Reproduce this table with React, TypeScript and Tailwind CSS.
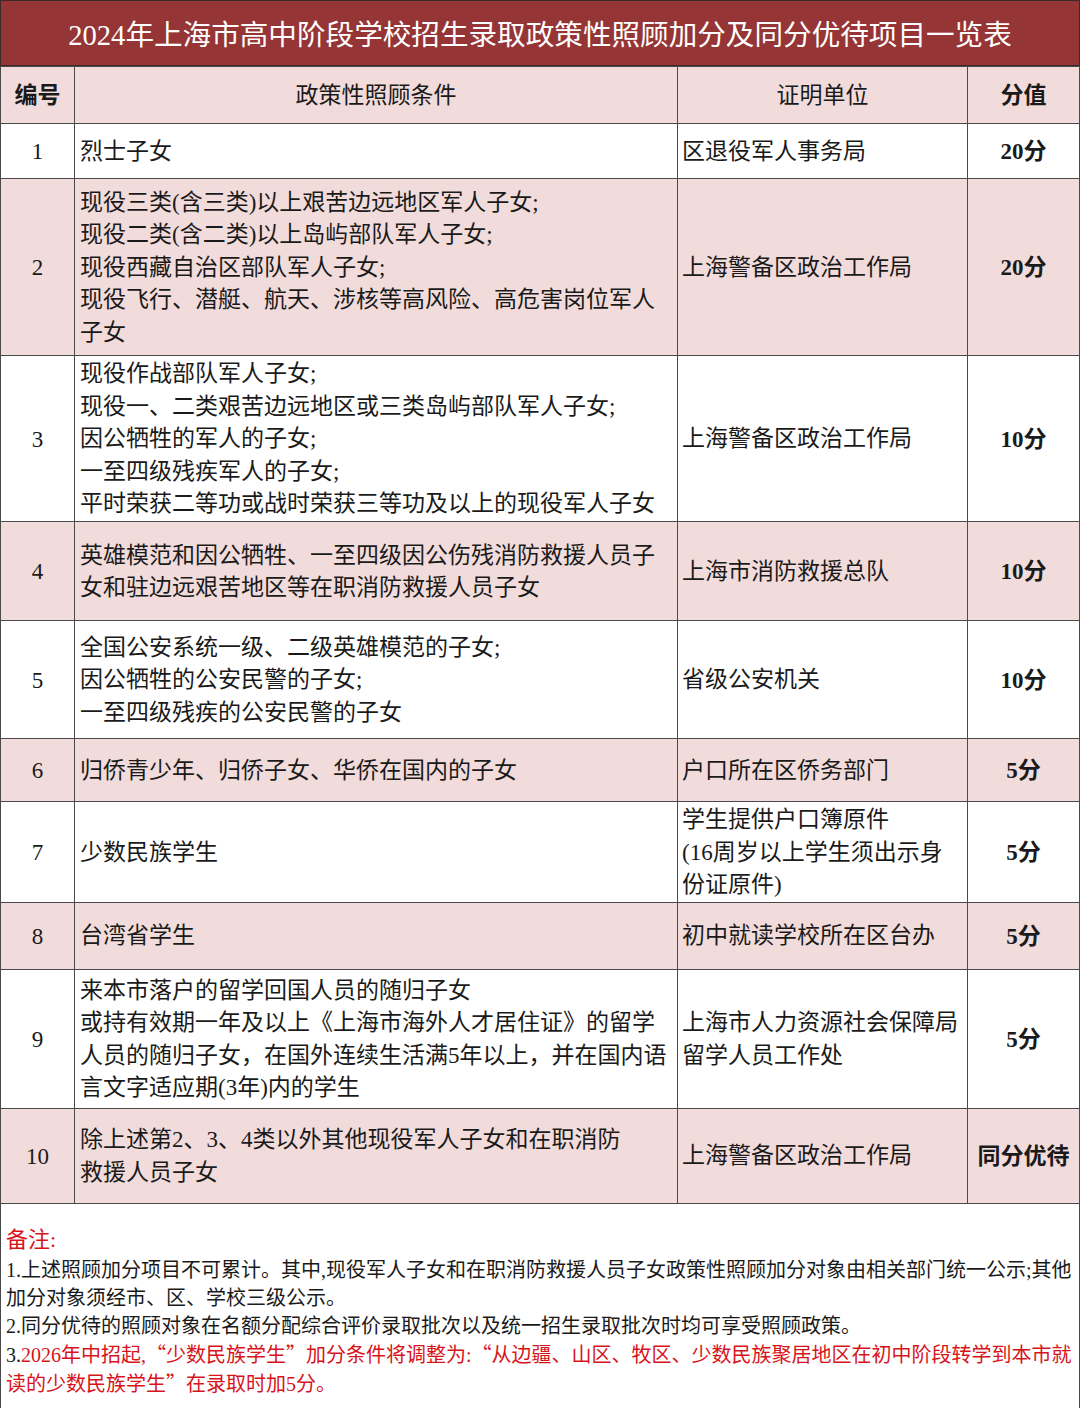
const font = "font-['Liberation_Serif','Noto_Sans_CJK_SC',serif]";

type Row = {
  no: string;
  cond: string[];
  cert: string[];
  score: string;
  h: string;
  pink: boolean;
};

const rows: Row[] = [
  { no: "1", cond: ["烈士子女"], cert: ["区退役军人事务局"], score: "20分", h: "h-[55px]", pink: false },
  {
    no: "2",
    cond: [
      "现役三类(含三类)以上艰苦边远地区军人子女;",
      "现役二类(含二类)以上岛屿部队军人子女;",
      "现役西藏自治区部队军人子女;",
      "现役飞行、潜艇、航天、涉核等高风险、高危害岗位军人",
      "子女",
    ],
    cert: ["上海警备区政治工作局"],
    score: "20分",
    h: "h-[177px]",
    pink: true,
  },
  {
    no: "3",
    cond: [
      "现役作战部队军人子女;",
      "现役一、二类艰苦边远地区或三类岛屿部队军人子女;",
      "因公牺牲的军人的子女;",
      "一至四级残疾军人的子女;",
      "平时荣获二等功或战时荣获三等功及以上的现役军人子女",
    ],
    cert: ["上海警备区政治工作局"],
    score: "10分",
    h: "h-[166px]",
    pink: false,
  },
  {
    no: "4",
    cond: ["英雄模范和因公牺牲、一至四级因公伤残消防救援人员子", "女和驻边远艰苦地区等在职消防救援人员子女"],
    cert: ["上海市消防救援总队"],
    score: "10分",
    h: "h-[99px]",
    pink: true,
  },
  {
    no: "5",
    cond: ["全国公安系统一级、二级英雄模范的子女;", "因公牺牲的公安民警的子女;", "一至四级残疾的公安民警的子女"],
    cert: ["省级公安机关"],
    score: "10分",
    h: "h-[118px]",
    pink: false,
  },
  {
    no: "6",
    cond: ["归侨青少年、归侨子女、华侨在国内的子女"],
    cert: ["户口所在区侨务部门"],
    score: "5分",
    h: "h-[63px]",
    pink: true,
  },
  {
    no: "7",
    cond: ["少数民族学生"],
    cert: ["学生提供户口簿原件", "(16周岁以上学生须出示身", "份证原件)"],
    score: "5分",
    h: "h-[100px]",
    pink: false,
  },
  {
    no: "8",
    cond: ["台湾省学生"],
    cert: ["初中就读学校所在区台办"],
    score: "5分",
    h: "h-[67px]",
    pink: true,
  },
  {
    no: "9",
    cond: [
      "来本市落户的留学回国人员的随归子女",
      "或持有效期一年及以上《上海市海外人才居住证》的留学",
      "人员的随归子女，在国外连续生活满5年以上，并在国内语",
      "言文字适应期(3年)内的学生",
    ],
    cert: ["上海市人力资源社会保障局", "留学人员工作处"],
    score: "5分",
    h: "h-[139px]",
    pink: false,
  },
  {
    no: "10",
    cond: ["除上述第2、3、4类以外其他现役军人子女和在职消防", "救援人员子女"],
    cert: ["上海警备区政治工作局"],
    score: "同分优待",
    h: "h-[95px]",
    pink: true,
  },
];

function Lines({ lines }: { lines: string[] }) {
  return (
    <div className="flex flex-col pt-[2px]">
      {lines.map((l, i) => (
        <div key={i} className="whitespace-nowrap leading-[32.5px]">
          {l}
        </div>
      ))}
    </div>
  );
}

// full-width CJK quote marks
function Q({ children }: { children: string }) {
  return <span className="font-['Noto_Sans_CJK_SC',sans-serif]">{children}</span>;
}

export default function App() {
  return (
    <div className={`w-[1080px] h-[1408px] bg-white text-[#1a1a1a] ${font}`}>
      <div className="h-[66px] bg-[#963535] border border-[#3a2a2a] flex items-center justify-center pt-[6px] text-white text-[28.6px]">
        2024年上海市高中阶段学校招生录取政策性照顾加分及同分优待项目一览表
      </div>
      <table className="w-[1080px] table-fixed border-collapse text-[23px]">
        <colgroup>
          <col className="w-[74px]" />
          <col className="w-[603px]" />
          <col className="w-[290px]" />
          <col />
        </colgroup>
        <thead>
          <tr className="h-[57px] bg-[#f2dcdb]">
            <th className="border border-[#4a4a4a] pt-[3px] font-bold text-center">编号</th>
            <th className="border border-[#4a4a4a] pt-[3px] font-normal text-center">政策性照顾条件</th>
            <th className="border border-[#4a4a4a] pt-[3px] font-normal text-center">证明单位</th>
            <th className="border border-[#4a4a4a] pt-[3px] font-bold text-center">分值</th>
          </tr>
        </thead>
        <tbody>
          {rows.map((r) => (
            <tr key={r.no} className={`${r.h} ${r.pink ? "bg-[#f2dcdb]" : "bg-white"}`}>
              <td className="border border-[#4a4a4a] pt-[3px] text-center align-middle">{r.no}</td>
              <td className="border border-[#4a4a4a] pl-[5px] align-middle">
                <Lines lines={r.cond} />
              </td>
              <td className="border border-[#4a4a4a] pl-[4px] align-middle">
                <Lines lines={r.cert} />
              </td>
              <td className="border border-[#4a4a4a] pt-[3px] text-center align-middle font-bold">{r.score}</td>
            </tr>
          ))}
        </tbody>
      </table>
      <div className="h-[206px] border-x border-b border-[#4a4a4a] px-[5px] pt-[21px] text-[20px] leading-[28px]">
        <div className="text-[#d7141b] text-[22px] leading-[30px] mb-[1px]">备注:</div>
        <div>1.上述照顾加分项目不可累计。其中,现役军人子女和在职消防救援人员子女政策性照顾加分对象由相关部门统一公示;其他</div>
        <div>加分对象须经市、区、学校三级公示。</div>
        <div>2.同分优待的照顾对象在名额分配综合评价录取批次以及统一招生录取批次时均可享受照顾政策。</div>
        <div className="whitespace-nowrap">
          3.
          <span className="text-[#d7141b]">
            2026年中招起,<Q>“</Q>少数民族学生<Q>”</Q>加分条件将调整为:<Q>“</Q>从边疆、山区、牧区、少数民族聚居地区在初中阶段转学到本市就
          </span>
        </div>
        <div className="text-[#d7141b]">
          读的少数民族学生<Q>”</Q>在录取时加5分。
        </div>
      </div>
    </div>
  );
}
